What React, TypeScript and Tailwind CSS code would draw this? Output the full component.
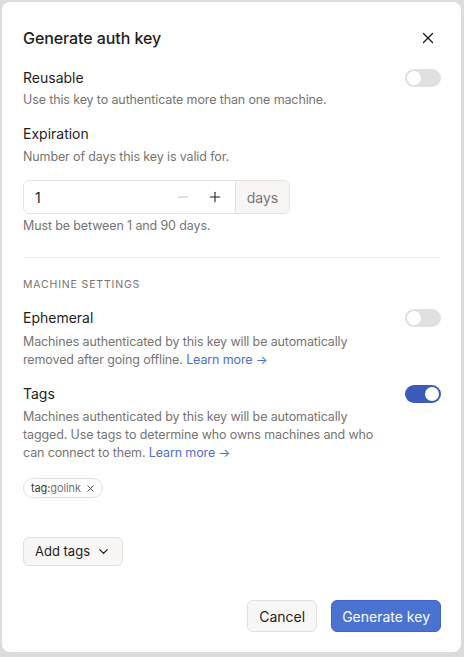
import { X, Minus, Plus, ChevronDown } from "lucide-react";

function Toggle({ on }: { on?: boolean }) {
  return (
    <div
      className={
        "w-[36px] h-[18px] rounded-full p-[2px] flex items-center shrink-0 " +
        (on ? "bg-[#3a5bb8] justify-end" : "bg-[#e2e0de] justify-start")
      }
    >
      <div className="w-[14px] h-[14px] rounded-full bg-white" />
    </div>
  );
}

function LearnMore() {
  return <span className="text-[#4b70cc]">Learn more →</span>;
}

export default function App() {
  return (
    <div
      className="w-[464px] h-[657px] bg-[#dcdcdc] pt-[2px] pl-[2px] pr-[3px] pb-[5px]"
      style={{ fontFamily: "Inter, 'Noto Sans', sans-serif" }}
    >
      <div className="h-full bg-white rounded-[8px] pt-[24px] pl-[21px] pr-[20px] pb-[20px] flex flex-col text-[#1f1e1e]">
        <div className="flex items-center justify-between">
          <h1 className="text-[16px] leading-[24px] font-medium tracking-[-0.005em]">Generate auth key</h1>
          <X size={18} strokeWidth={1.8} className="mr-[4px]" />
        </div>

        <div className="mt-[18px] flex items-center justify-between">
          <div className="text-[14px] leading-[20px]">Reusable</div>
          <Toggle />
        </div>
        <p className="mt-[3px] text-[12.5px] leading-[18px] tracking-[-0.01em] text-[#777471]">
          Use this key to authenticate more than one machine.
        </p>

        <div className="mt-[15px] text-[14px] leading-[20px]">Expiration</div>
        <p className="mt-[4px] text-[12.5px] leading-[18px] tracking-[-0.01em] text-[#777471]">
          Number of days this key is valid for.
        </p>

        <div className="mt-[14px] w-[267px] h-[34px] border border-[#e5e3e1] rounded-[6px] flex overflow-hidden">
          <div className="flex-1 flex items-center pl-[11px] text-[14px]">1</div>
          <div className="flex items-center gap-[16px] pr-[12px]">
            <Minus size={16} strokeWidth={1.3} className="text-[#b9b7b5]" />
            <Plus size={16} strokeWidth={1.6} className="text-[#1f1e1e]" />
          </div>
          <div className="w-[54px] bg-[#f7f6f5] border-l border-[#e5e3e1] flex items-center justify-center text-[14px] text-[#777471]">
            days
          </div>
        </div>
        <p className="mt-[3px] text-[12.5px] leading-[18px] tracking-[-0.01em] text-[#777471]">
          Must be between 1 and 90 days.
        </p>

        <div className="mt-[22px] h-px bg-[#eeedec]" />

        <div className="mt-[19px] text-[10.5px] leading-[16px] tracking-[0.08em] text-[#777471]">
          MACHINE SETTINGS
        </div>

        <div className="mt-[15px] flex items-center justify-between">
          <div className="text-[14px] leading-[20px]">Ephemeral</div>
          <Toggle />
        </div>
        <p className="mt-[5px] pr-[48px] text-[12.5px] leading-[18px] tracking-[-0.01em] text-[#777471]">
          Machines authenticated by this key will be automatically removed after going offline.{" "}
          <LearnMore />
        </p>

        <div className="mt-[15px] flex items-center justify-between">
          <div className="text-[14px] leading-[20px]">Tags</div>
          <Toggle on />
        </div>
        <p className="mt-[4px] pr-[48px] text-[12.5px] leading-[18px] tracking-[-0.01em] text-[#777471]">
          Machines authenticated by this key will be automatically tagged. Use tags to determine who owns
          machines and who can connect to them. <LearnMore />
        </p>

        <div className="mt-[16px] flex">
          <div className="h-[20px] border border-[#e2e0de] rounded-full pl-[7px] pr-[6px] flex items-center gap-[4px] text-[11px] tracking-[-0.01em]">
            <span>
              <span className="text-[#3a3938]">tag:</span>
              <span className="text-[#777471]">golink</span>
            </span>
            <X size={11} strokeWidth={2} className="text-[#3a3938]" />
          </div>
        </div>

        <div className="mt-[39px] flex">
          <button className="h-[29px] px-[11px] bg-[#f8f7f6] border border-[#e2e0de] rounded-[6px] flex items-center gap-[6px] text-[13px] text-[#1f1e1e]">
            Add tags
            <ChevronDown size={15} strokeWidth={2} />
          </button>
        </div>

        <div className="mt-auto flex justify-end gap-[14px]">
          <button className="h-[32px] px-[11px] bg-[#f8f7f6] border border-[#e2e0de] rounded-[6px] text-[14px] text-[#1f1e1e]">
            Cancel
          </button>
          <button className="h-[32px] px-[10px] bg-[#4a72d1] border border-[#3f65c2] rounded-[6px] text-[14px] text-white">
            Generate key
          </button>
        </div>
      </div>
    </div>
  );
}
